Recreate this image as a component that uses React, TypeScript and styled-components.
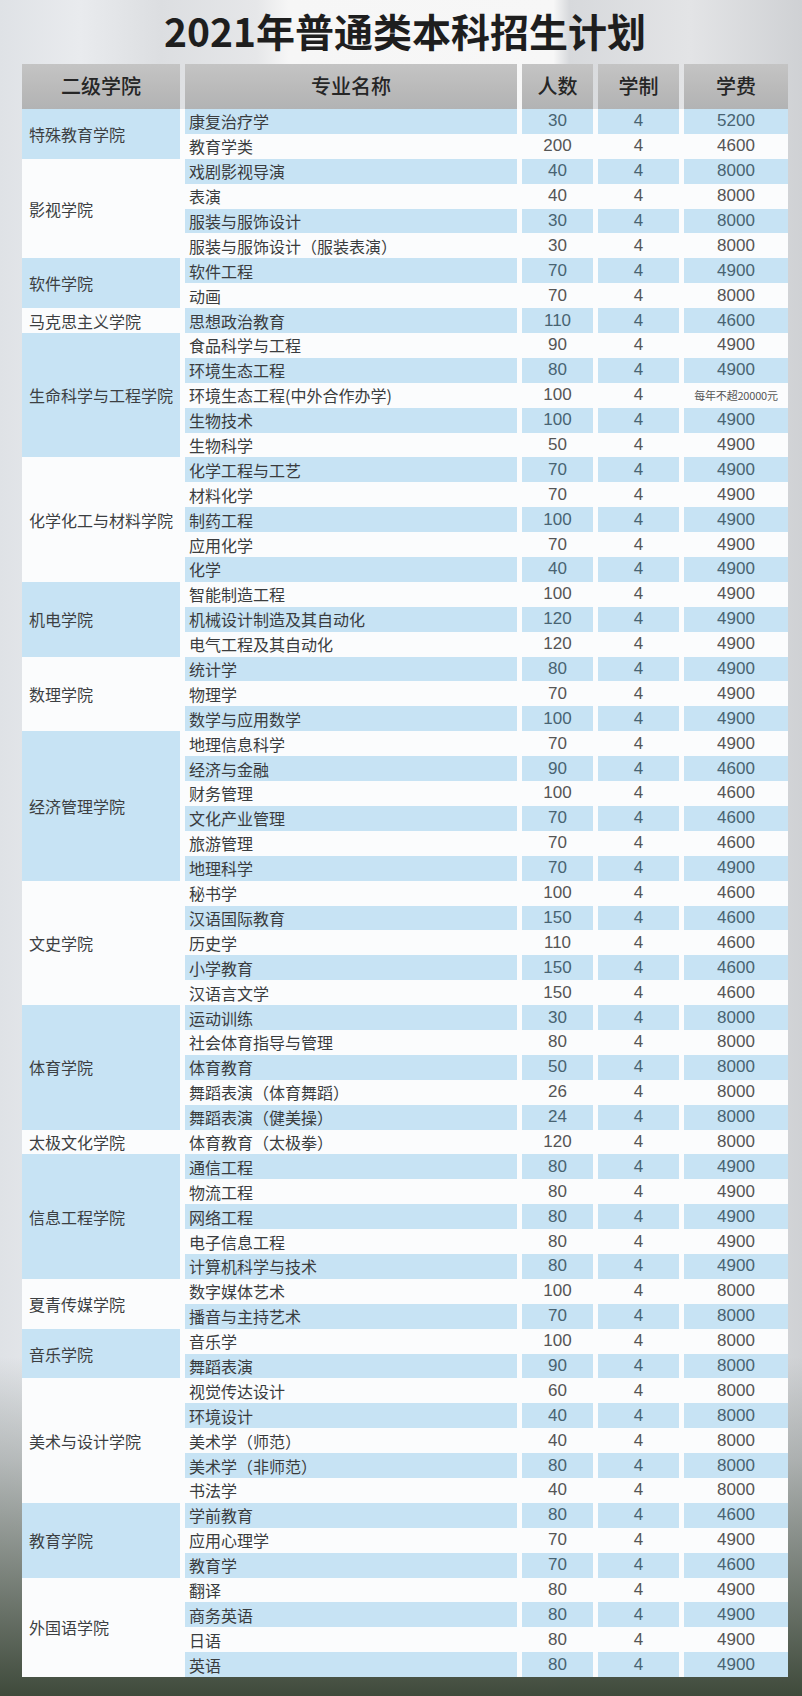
import React from "react";
import styled, { createGlobalStyle } from "styled-components";

const BLUE = "#c7e3f4";
const COLUMNS = "158px 332px 71px 81px 104px";

const GlobalStyle = createGlobalStyle`
  html, body {
    margin: 0;
    padding: 0;
    background: #e4e6e9;
  }
  * {
    box-sizing: border-box;
  }
`;

const Page = styled.div`
  position: relative;
  width: 802px;
  height: 1696px;
  overflow: hidden;
  padding: 0 14px 0 22px;
  font-family: "Noto Sans CJK SC", "Liberation Sans", sans-serif;
  background:
    linear-gradient(
      to bottom,
      rgba(0, 0, 0, 0) 0%,
      rgba(0, 0, 0, 0) 80%,
      rgba(130, 136, 132, 0.45) 86%,
      rgba(84, 94, 82, 0.85) 95%,
      #3f4a3b 100%
    ),
    linear-gradient(
      to right,
      #dfe2e6 0%,
      #e9ebee 10%,
      #dcdee1 20%,
      #e6e7e9 32%,
      #f6f6f6 36%,
      #f7f7f7 69%,
      #d7d9dc 71%,
      #e3e4e6 86%,
      #cfd1d4 100%
    );
`;

const Title = styled.h1`
  margin: 0;
  height: 64px;
  padding-top: 6px;
  text-align: center;
  font-size: 39px;
  line-height: 48px;
  font-weight: 700;
  color: #1e1e1e;
  white-space: nowrap;
`;

const HeaderRow = styled.div`
  display: grid;
  grid-template-columns: ${COLUMNS};
  column-gap: 5px;
  height: 45px;
`;

const HeaderCell = styled.div`
  display: flex;
  align-items: center;
  justify-content: center;
  background: linear-gradient(to bottom, #c4c4c4 0%, #b9b9b9 60%, #b2b3b4 100%);
  color: #262626;
  font-size: 20px;
  font-weight: 500;
  padding-bottom: 2px;
`;

const Body = styled.div`
  display: grid;
  grid-template-columns: ${COLUMNS};
  grid-auto-rows: 24.9px;
  column-gap: 5px;
  background: #fbfcfd;
`;

const College = styled.div<{ $span: number; $shade: boolean }>`
  grid-column: 1;
  grid-row: span ${(p) => p.$span};
  display: flex;
  align-items: center;
  padding-left: 7px;
  background: ${(p) => (p.$shade ? BLUE : "#fbfcfd")};
  color: #3c3f42;
  font-size: 16px;
  white-space: nowrap;
`;

const Cell = styled.div<{ $shade: boolean; $center?: boolean; $num?: boolean }>`
  display: flex;
  align-items: center;
  justify-content: ${(p) => (p.$center ? "center" : "flex-start")};
  padding-left: ${(p) => (p.$center ? "0" : "4px")};
  background: ${(p) => (p.$shade ? BLUE : "#fbfcfd")};
  color: ${(p) => (p.$num ? (p.$shade ? "#486372" : "#555") : "#3a3c3e")};
  font-family: ${(p) =>
    p.$num ? `"Liberation Sans", "Noto Sans CJK SC", sans-serif` : `"Noto Sans CJK SC", "Liberation Sans", sans-serif`};
  font-size: ${(p) => (p.$num ? "17px" : "16px")};
  white-space: nowrap;
`;

const FeeNote = styled.span`
  font-family: "Noto Sans CJK SC", sans-serif;
  font-size: 11px;
  letter-spacing: -0.2px;
  color: #555;
`;

type Major = [string, number, string];

interface Group {
  college: string;
  majors: Major[];
}

const groups: Group[] = [
  { college: "特殊教育学院", majors: [["康复治疗学", 30, "5200"], ["教育学类", 200, "4600"]] },
  {
    college: "影视学院",
    majors: [
      ["戏剧影视导演", 40, "8000"],
      ["表演", 40, "8000"],
      ["服装与服饰设计", 30, "8000"],
      ["服装与服饰设计（服装表演）", 30, "8000"],
    ],
  },
  { college: "软件学院", majors: [["软件工程", 70, "4900"], ["动画", 70, "8000"]] },
  { college: "马克思主义学院", majors: [["思想政治教育", 110, "4600"]] },
  {
    college: "生命科学与工程学院",
    majors: [
      ["食品科学与工程", 90, "4900"],
      ["环境生态工程", 80, "4900"],
      ["环境生态工程(中外合作办学)", 100, "每年不超20000元"],
      ["生物技术", 100, "4900"],
      ["生物科学", 50, "4900"],
    ],
  },
  {
    college: "化学化工与材料学院",
    majors: [
      ["化学工程与工艺", 70, "4900"],
      ["材料化学", 70, "4900"],
      ["制药工程", 100, "4900"],
      ["应用化学", 70, "4900"],
      ["化学", 40, "4900"],
    ],
  },
  {
    college: "机电学院",
    majors: [
      ["智能制造工程", 100, "4900"],
      ["机械设计制造及其自动化", 120, "4900"],
      ["电气工程及其自动化", 120, "4900"],
    ],
  },
  {
    college: "数理学院",
    majors: [
      ["统计学", 80, "4900"],
      ["物理学", 70, "4900"],
      ["数学与应用数学", 100, "4900"],
    ],
  },
  {
    college: "经济管理学院",
    majors: [
      ["地理信息科学", 70, "4900"],
      ["经济与金融", 90, "4600"],
      ["财务管理", 100, "4600"],
      ["文化产业管理", 70, "4600"],
      ["旅游管理", 70, "4600"],
      ["地理科学", 70, "4900"],
    ],
  },
  {
    college: "文史学院",
    majors: [
      ["秘书学", 100, "4600"],
      ["汉语国际教育", 150, "4600"],
      ["历史学", 110, "4600"],
      ["小学教育", 150, "4600"],
      ["汉语言文学", 150, "4600"],
    ],
  },
  {
    college: "体育学院",
    majors: [
      ["运动训练", 30, "8000"],
      ["社会体育指导与管理", 80, "8000"],
      ["体育教育", 50, "8000"],
      ["舞蹈表演（体育舞蹈）", 26, "8000"],
      ["舞蹈表演（健美操）", 24, "8000"],
    ],
  },
  { college: "太极文化学院", majors: [["体育教育（太极拳）", 120, "8000"]] },
  {
    college: "信息工程学院",
    majors: [
      ["通信工程", 80, "4900"],
      ["物流工程", 80, "4900"],
      ["网络工程", 80, "4900"],
      ["电子信息工程", 80, "4900"],
      ["计算机科学与技术", 80, "4900"],
    ],
  },
  { college: "夏青传媒学院", majors: [["数字媒体艺术", 100, "8000"], ["播音与主持艺术", 70, "8000"]] },
  { college: "音乐学院", majors: [["音乐学", 100, "8000"], ["舞蹈表演", 90, "8000"]] },
  {
    college: "美术与设计学院",
    majors: [
      ["视觉传达设计", 60, "8000"],
      ["环境设计", 40, "8000"],
      ["美术学（师范）", 40, "8000"],
      ["美术学（非师范）", 80, "8000"],
      ["书法学", 40, "8000"],
    ],
  },
  {
    college: "教育学院",
    majors: [
      ["学前教育", 80, "4600"],
      ["应用心理学", 70, "4900"],
      ["教育学", 70, "4600"],
    ],
  },
  {
    college: "外国语学院",
    majors: [
      ["翻译", 80, "4900"],
      ["商务英语", 80, "4900"],
      ["日语", 80, "4900"],
      ["英语", 80, "4900"],
    ],
  },
];

const headers = ["二级学院", "专业名称", "人数", "学制", "学费"];

export default function App() {
  let row = 0;
  return (
    <>
      <GlobalStyle />
      <Page>
        <Title>2021年普通类本科招生计划</Title>
        <HeaderRow>
          {headers.map((h) => (
            <HeaderCell key={h}>{h}</HeaderCell>
          ))}
        </HeaderRow>
        <Body>
          {groups.map((g, gi) => (
            <React.Fragment key={g.college}>
              <College $span={g.majors.length} $shade={gi % 2 === 0}>
                {g.college}
              </College>
              {g.majors.map(([name, count, fee]) => {
                const shade = row % 2 === 0;
                row += 1;
                return (
                  <React.Fragment key={name + row}>
                    <Cell $shade={shade}>{name}</Cell>
                    <Cell $shade={shade} $center $num>
                      {count}
                    </Cell>
                    <Cell $shade={shade} $center $num>
                      4
                    </Cell>
                    <Cell $shade={shade} $center $num>
                      {fee.length > 5 ? <FeeNote>{fee}</FeeNote> : fee}
                    </Cell>
                  </React.Fragment>
                );
              })}
            </React.Fragment>
          ))}
        </Body>
      </Page>
    </>
  );
}
